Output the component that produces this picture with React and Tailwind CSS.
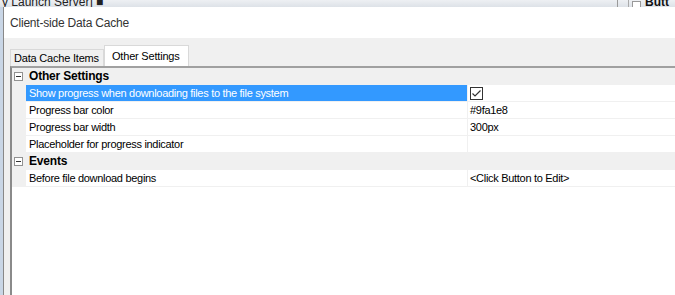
const font = { fontFamily: '"Liberation Sans", Arial, sans-serif' };

const Minus = () => (
  <div className="w-[9px] h-[9px] border border-[#919191] bg-white flex items-center justify-center ml-[2px] mr-[6px]">
    <div className="w-[5px] h-px bg-[#333]" />
  </div>
);

const Category = ({ label }) => (
  <div className="flex items-center h-[17px] bg-[#f0f0f0] border-b border-[#f0f0f0]">
    <Minus />
    <span className="font-bold text-[12px] tracking-[-0.2px] text-black leading-none">{label}</span>
  </div>
);

const Row = ({ label, value, selected, check }) => (
  <div className="flex h-[17px] border-b border-[#f0f0f0]">
    <div className="w-[14px] bg-[#f0f0f0] shrink-0" />
    <div
      className={`w-[441px] shrink-0 flex items-center pl-[3px] text-[11px] tracking-[-0.3px] leading-none whitespace-nowrap ${
        selected ? "bg-[#3399ff] text-white" : "text-black"
      }`}
    >
      {label}
    </div>
    <div className="w-px bg-[#f0f0f0] shrink-0" />
    <div className="flex-1 flex items-center pl-[2px] text-[11px] tracking-[-0.3px] leading-none text-black whitespace-nowrap">
      {check ? (
        <svg width="13" height="13" viewBox="0 0 13 13">
          <rect x="0.5" y="0.5" width="12" height="12" fill="white" stroke="#333" />
          <path d="M2.5 6.5 L5 9 L10.5 3.5" fill="none" stroke="#333" strokeWidth="1.2" />
        </svg>
      ) : (
        value
      )}
    </div>
  </div>
);

export default function App() {
  return (
    <div className="w-[675px] h-[295px] overflow-hidden flex flex-col bg-white" style={font}>
      {/* window behind */}
      <div className="h-[7px] shrink-0 flex bg-gradient-to-b from-[#eef0f3] to-[#dde2e8] overflow-hidden relative">
        <span className="absolute left-[2px] top-[-7px] text-[12px] text-[#222] whitespace-nowrap">
          y Launch Server] ■
        </span>
        <div className="absolute left-[617px] top-0 h-[7px] w-px bg-[#999]" />
        <div className="absolute left-[628px] top-0 h-[7px] w-px bg-[#aaa]" />
        <div className="absolute left-[632px] top-[1px] w-[9px] h-[9px] border border-[#999] bg-white" />
        <span className="absolute left-[645px] top-[-7px] text-[12px] font-bold text-[#111] whitespace-nowrap">
          Butt
        </span>
      </div>
      <div className="flex flex-1">
        <div className="w-[3px] shrink-0 bg-[#c9d6e6]" />
        <div className="flex-1 flex flex-col border-l border-[#888]">
          <div className="h-[31px] shrink-0 flex items-center pl-[6px] text-[12px] tracking-[-0.2px] text-[#333] bg-white">
            Client-side Data Cache
          </div>
          <div className="flex-1 flex flex-col bg-[#f0f0f0] pl-[6px]">
            <div className="flex items-end h-[28px] pt-[3px]">
              <div className="h-[17px] w-[94px] border border-b-0 border-[#d9d9d9] bg-[#f0f0f0] flex items-center pl-[3px] text-[11px] tracking-[-0.2px] text-black whitespace-nowrap">
                Data Cache Items
              </div>
              <div className="h-[22px] w-[85px] border border-b-0 border-[#d9d9d9] bg-white flex items-center pl-[7px] -mb-[1px] text-[11px] tracking-[-0.2px] text-black whitespace-nowrap">
                Other Settings
              </div>
            </div>
            <div className="flex-1 bg-white border-t-2 border-l-2 border-t-[#a0a0a0] border-l-[#8a8a8a]">
              <Category label="Other Settings" />
              <Row label="Show progress when downloading files to the file system" selected check />
              <Row label="Progress bar color" value="#9fa1e8" />
              <Row label="Progress bar width" value="300px" />
              <Row label="Placeholder for progress indicator" value="" />
              <Category label="Events" />
              <Row label="Before file download begins" value="<Click Button to Edit>" />
            </div>
          </div>
        </div>
      </div>
    </div>
  );
}
